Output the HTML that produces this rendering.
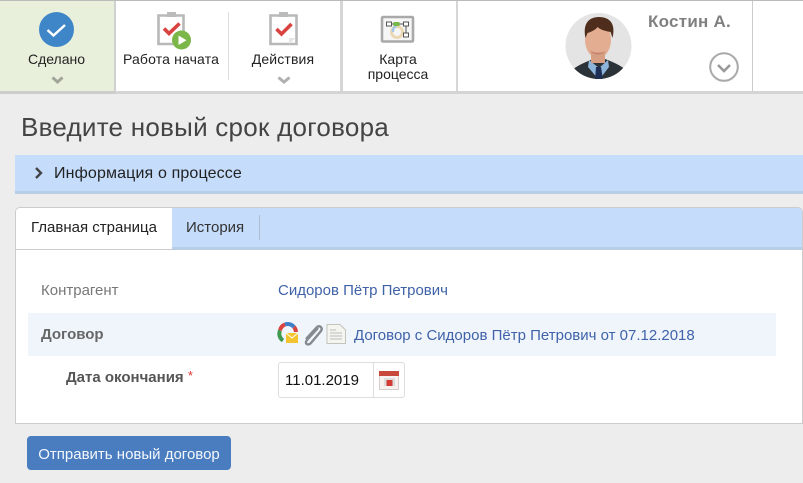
<!DOCTYPE html>
<html><head><meta charset="utf-8"><style>
*{box-sizing:border-box}
html,body{margin:0;padding:0}
body{width:803px;height:483px;background:#ededed;position:relative;overflow:hidden;font-family:"Liberation Sans",sans-serif;color:#222}
.a{position:absolute}
.t{position:absolute;white-space:nowrap}
.c{text-align:center}
</style></head><body>
<div class="a" style="left:0;top:0;width:803px;height:94px;background:#fff;border-top:1px solid #bbb;border-bottom:3px solid #d4d4d4"></div>
<div class="a" style="left:0;top:1px;width:116px;height:93px;background:#e8f0dc;border-right:2px solid #d0d0d0;border-bottom:3px solid #ccc"></div>
<div class="a" style="left:228px;top:12px;width:1px;height:68px;background:#ddd"></div>
<div class="a" style="left:340px;top:1px;width:3px;height:90px;background:#d6d6d6"></div>
<div class="a" style="left:456px;top:1px;width:2px;height:90px;background:#d6d6d6"></div>
<div class="a" style="left:752px;top:1px;width:1px;height:90px;background:#ccc"></div>

<svg class="a" style="left:0;top:0" width="803" height="94" viewBox="0 0 803 94">
<circle cx="56.500" cy="29.500" r="17.500" fill="#3f86c8"/>
<path d="M47.500 30l6 5.500 11.500-10.500" fill="none" stroke="#fff" stroke-width="2.400"/>
<path d="M52.500 77.500l5 4.500 5-4.500" fill="none" stroke="#a0a598" stroke-width="3"/>
<path d="M158.500 15.500h25v28.500h-25z" fill="#fff" stroke="#b8b8b8" stroke-width="2.600"/>
<rect x="167" y="12" width="9" height="5" fill="#bbb"/>
<path d="M164 28.500l5 5 10.500-10" fill="none" stroke="#d9433f" stroke-width="3.600"/>
<circle cx="181.500" cy="40" r="9.500" fill="#7ab648"/>
<path d="M178.500 35.500v9.500l8-4.750z" fill="#fff"/>
<path d="M270.500 15.500h26v28.500h-26z" fill="#fff" stroke="#b8b8b8" stroke-width="2.600"/>
<rect x="279" y="12" width="9" height="5" fill="#bbb"/>
<path d="M276.500 29l5 5 10-10" fill="none" stroke="#d9433f" stroke-width="3.600"/>
<path d="M289 44v-6h6.500z" fill="#e4e4e4"/>
<path d="M278.500 77.500l5.500 4.500 5.500-4.500" fill="none" stroke="#b0b0b0" stroke-width="3"/>
<rect x="382" y="17" width="31" height="24.500" rx="1" fill="#f6f6f6" stroke="#a9a9a9" stroke-width="2.600"/>
<circle cx="397" cy="32" r="5.500" fill="none" stroke="#ecd9b4" stroke-width="3"/>
<path d="M393 32a4 5 0 0 1 4-6" fill="none" stroke="#a5c8e8" stroke-width="2.500"/>
<path d="M406 26v7" fill="none" stroke="#555" stroke-width="1"/>
<path d="M392 24h11" stroke="#555" stroke-width="1"/>
<path d="M393.500 24h6" stroke="#76b947" stroke-width="4"/>
<rect x="386.500" y="22" width="5" height="4" fill="#fff" stroke="#555"/>
<rect x="403.500" y="22" width="5" height="4" fill="#fff" stroke="#555"/>
<rect x="403.500" y="33" width="5" height="4" fill="#fff" stroke="#555"/>
<clipPath id="av"><circle cx="598.500" cy="46" r="33"/></clipPath>
<circle cx="598.500" cy="46" r="33" fill="#e4e4e4"/>
<g clip-path="url(#av)">
<path d="M572 70c6-5 14-8 21-11h12c8 3 15 6 21 11l-4 12h-46z" fill="#2b3238"/>
<path d="M589 60l10 8 9-8 1 7-10 13-11-13z" fill="#8db5dc"/>
<path d="M596 67h5l2 13h-8z" fill="#1e2f55"/>
<ellipse cx="598" cy="40" rx="13" ry="18" fill="#e3ad92"/>
<rect x="591" y="52" width="14" height="11" fill="#d69f83"/>
<path d="M585.500 38c-3-14 3-21 13.500-21 11 0 17 7 13.500 21l-2-6c-5-1-10-2-13-5-2 3-7 5-10 6z" fill="#4f2d1c"/>
<path d="M590 50c4 4 13 4 16 0-3 6-13 6-16 0z" fill="#c8806e"/>
</g>
<circle cx="724" cy="67" r="13.800" fill="none" stroke="#a9a9a9" stroke-width="2"/>
<path d="M718 65l6 6 6-6" fill="none" stroke="#999" stroke-width="2.600"/>
</svg>

<div class="t c" style="left:0;width:113px;top:51px;font-size:14px">Сделано</div>
<div class="t c" style="left:115px;width:112px;top:51px;font-size:14px;letter-spacing:.15px">Работа начата</div>
<div class="t c" style="left:229px;width:108px;top:51px;font-size:14px;letter-spacing:.15px">Действия</div>
<div class="t c" style="left:343px;width:110px;top:52px;font-size:14px;line-height:15px;white-space:normal">Карта<br>процесса</div>
<div class="t" style="left:648px;top:12px;font-size:17px;font-weight:700;color:#808080;letter-spacing:.25px">Костин А.</div>

<div class="t" style="left:21px;top:112px;font-size:26px;color:#444;letter-spacing:.25px">Введите новый срок договора</div>

<div class="a" style="left:15px;top:155px;width:788px;height:39px;background:#c5dcfb;border-bottom:3px solid #b8cde6"></div>
<svg class="a" style="left:33px;top:167px" width="12" height="12"><path d="M3 1l5 5-5 5" fill="none" stroke="#444" stroke-width="2.400"/></svg>
<div class="t" style="left:54px;top:165px;font-size:16px;letter-spacing:.14px;color:#222">Информация о процессе</div>

<div class="a" style="left:15px;top:207px;width:788px;height:217px;background:#fff;border:1px solid #ccc;border-radius:5px 5px 0 0"></div>
<div class="a" style="left:16px;top:208px;width:786px;height:42px;background:#c5dcfb;border-bottom:3px solid #b8cde6;border-radius:4px 4px 0 0"></div>
<div class="a" style="left:16px;top:208px;width:156px;height:42px;background:#fff;border-radius:4px 0 0 0;border-bottom:1px solid #ccc"></div>
<div class="a" style="left:259px;top:215px;width:1px;height:25px;background:#aebfd4"></div>
<div class="t" style="left:31px;top:219px;font-size:15px;color:#222">Главная страница</div>
<div class="t" style="left:186px;top:219px;font-size:15px;color:#333">История</div>

<div class="t" style="left:41px;top:282px;font-size:15px;color:#777">Контрагент</div>
<div class="t" style="left:278px;top:282px;font-size:15px;color:#3f62a8">Сидоров Пётр Петрович</div>

<div class="a" style="left:28px;top:313px;width:748px;height:43px;background:#f0f5fc"></div>
<div class="t" style="left:41px;top:326px;font-size:15px;font-weight:700;color:#666">Договор</div>
<svg class="a" style="left:277px;top:322px" width="74" height="24">
<path d="M17 5a8 8 0 0 0-9-2.500" fill="none" stroke="#3f7fc8" stroke-width="4"/>
<path d="M8 2.500a8 8 0 0 0-5 6" fill="none" stroke="#d9433f" stroke-width="4"/>
<path d="M3 8.500a8 8 0 0 0 3 10" fill="none" stroke="#3f9a50" stroke-width="4"/>
<path d="M17 5a8 8 0 0 1 2 5" fill="none" stroke="#d9433f" stroke-width="4"/>
<path d="M9 11h12v10H9z" fill="#f4c430"/><path d="M9 11l6 5 6-5" fill="none" stroke="#fff"/>
<path d="M41 6l-11 12c-3 4 1 6 4 3l10-12c2-3-1-6-4-4l-11 12" fill="none" stroke="#858a90" stroke-width="2.400"/>
<path d="M50 2.500h13l5.500 5.500v13.500H50z" fill="#f5f5f0" stroke="#c4c4bc"/>
<path d="M53 8h6M53 11h12M53 14h12M53 17h12" stroke="#bbb"/>
</svg>
<div class="t" style="left:354px;top:327px;font-size:15px;color:#3f62a8">Договор с Сидоров Пётр Петрович от 07.12.2018</div>

<div class="t" style="left:66px;top:369px;font-size:15px;font-weight:700;color:#555">Дата окончания <span style="color:#d33;font-weight:400;font-size:13px;position:relative;top:-2px">*</span></div>
<div class="a" style="left:278px;top:362px;width:127px;height:36px;background:#fff;border:1px solid #ddd;border-radius:3px"></div>
<div class="a" style="left:373px;top:363px;width:1px;height:34px;background:#ddd"></div>
<div class="t" style="left:285px;top:372px;font-size:15px;color:#111">11.01.2019</div>
<svg class="a" style="left:378px;top:370px" width="22" height="21"><rect x="1.500" y="2.500" width="19" height="17" fill="#f7f2f0" stroke="#d5cfcc"/><rect x="1" y="1" width="20" height="5" fill="#c8493b"/><rect x="6" y="8" width="11" height="8" fill="#ddd"/><rect x="8.500" y="10" width="6" height="6" fill="#d33b35"/></svg>

<div class="a" style="left:27px;top:436px;width:204px;height:34px;background:#4a7dc0;border-radius:4px"></div>
<div class="t c" style="left:27px;width:204px;top:446px;font-size:15px;color:#f4f7fb">Отправить новый договор</div>
</body></html>
